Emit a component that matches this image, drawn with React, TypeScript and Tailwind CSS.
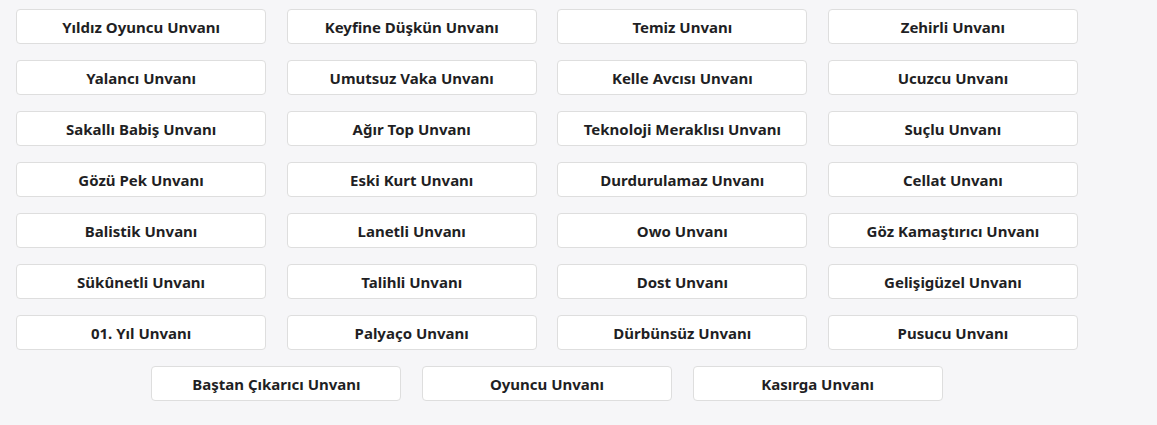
const titles = [
  'Yıldız Oyuncu Unvanı',
  'Keyfine Düşkün Unvanı',
  'Temiz Unvanı',
  'Zehirli Unvanı',
  'Yalancı Unvanı',
  'Umutsuz Vaka Unvanı',
  'Kelle Avcısı Unvanı',
  'Ucuzcu Unvanı',
  'Sakallı Babiş Unvanı',
  'Ağır Top Unvanı',
  'Teknoloji Meraklısı Unvanı',
  'Suçlu Unvanı',
  'Gözü Pek Unvanı',
  'Eski Kurt Unvanı',
  'Durdurulamaz Unvanı',
  'Cellat Unvanı',
  'Balistik Unvanı',
  'Lanetli Unvanı',
  'Owo Unvanı',
  'Göz Kamaştırıcı Unvanı',
  'Sükûnetli Unvanı',
  'Talihli Unvanı',
  'Dost Unvanı',
  'Gelişigüzel Unvanı',
  '01. Yıl Unvanı',
  'Palyaço Unvanı',
  'Dürbünsüz Unvanı',
  'Pusucu Unvanı',
  'Baştan Çıkarıcı Unvanı',
  'Oyuncu Unvanı',
  'Kasırga Unvanı',
];

export default function App() {
  return (
    <div className="min-h-[425px] w-full bg-[#f6f6f8] pt-[9px] pl-4" style={{ fontFamily: '"Noto Sans", "Open Sans", sans-serif' }}>
      <div className="flex w-[1062px] flex-wrap justify-center gap-x-[20.6px] gap-y-4">
        {titles.map((t) => (
          <button
            key={t}
            className="h-[35px] w-[250px] rounded-[4px] border border-[#dedede] bg-white pt-px text-[15px] font-bold text-[#1f1f24]"
          >
            {t}
          </button>
        ))}
      </div>
    </div>
  );
}
